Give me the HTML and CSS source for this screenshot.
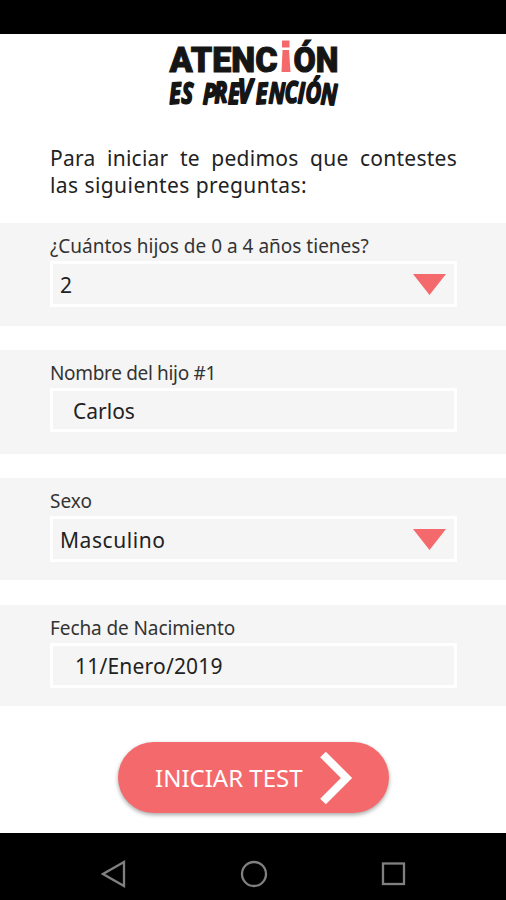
FILE: index.html
```html
<!DOCTYPE html>
<html lang="es">
<head>
<meta charset="utf-8">
<meta name="viewport" content="width=device-width, initial-scale=1">
<title>Atención es prevención</title>
<link rel="stylesheet" href="styles.css">
</head>
<body>
<div class="status-bar"></div>
<main>
  <header class="brand">
    <svg class="logo" width="174" height="74" viewBox="166 34 174 74" aria-label="Atención es prevención">
      <g class="logo-main">
        <text x="169.500" y="71.500" textLength="108" lengthAdjust="spacingAndGlyphs">ATENC</text>
        <text x="293.500" y="71.500" textLength="45" lengthAdjust="spacingAndGlyphs">ÓN</text>
      </g>
      <path class="logo-mark" d="M282 40.500h7.500v7h-7.500zM282.500 50h6.500l1.500 22h-9z"/>
      <g class="logo-brush" transform="translate(0 103) scale(.74 1)">
        <text x="229 245" y="1 0" rotate="-3 3">ES</text>
        <text x="274 290 308" y="1 0 1" rotate="2 -3 0">PRE</text>
        <text class="tall" x="321" y="0">V</text>
        <text x="346 363 385 402 413 433" y="1 0 0 0 0 1" rotate="-2 2 -3 3 0 3">ENCIÓN</text>
      </g>
    </svg>
  </header>
  <p class="intro"><span class="spread">Para iniciar te pedimos que contestes</span><span class="intro-end">las siguientes preguntas:</span></p>
  <form class="questions">
    <section class="band band-count">
      <div class="label label-count">¿Cuántos hijos de 0 a 4 años tienes?</div>
      <div class="field"><span>2</span><svg class="arrow" width="33" height="21" viewBox="0 0 33 21"><path d="M0 0H33L16.500 21z"/></svg></div>
    </section>
    <section class="band band-name">
      <div class="label label-name">Nombre del hijo #1</div>
      <div class="field field-name"><span class="name">Carlos</span></div>
    </section>
    <section class="band band-sex">
      <div class="label label-sex">Sexo</div>
      <div class="field"><span class="sex">Masculino</span><svg class="arrow" width="33" height="21" viewBox="0 0 33 21"><path d="M0 0H33L16.500 21z"/></svg></div>
    </section>
    <section class="band band-date">
      <div class="label label-date">Fecha de Nacimiento</div>
      <div class="field field-date"><span class="date">11/Enero/2019</span></div>
    </section>
    <button class="start" type="button"><span>INICIAR TEST</span><svg width="34" height="54" viewBox="0 0 34 54"><path d="M4 3.500L27.500 27L4 50.500"/></svg></button>
  </form>
</main>
<nav class="nav-bar">
  <svg width="26" height="28" viewBox="0 0 26 28"><path d="M23 2V26L2 14z"/></svg>
  <svg width="28" height="28" viewBox="0 0 28 28"><circle cx="14" cy="14" r="12"/></svg>
  <svg width="26" height="28" viewBox="0 0 26 28"><rect x="3" y="3.500" width="21" height="20.500"/></svg>
</nav>
</body>
</html>
```
FILE: styles.css
```css
* { box-sizing: border-box; }
body {
  margin: 0;
  width: 506px;
  height: 900px;
  display: flex;
  flex-direction: column;
  overflow: hidden;
  background: #fff;
  color: #222;
  font-family: "Noto Sans", sans-serif;
}
.status-bar { height: 34px; background: #000; flex: none; }
main { height: 799px; flex: none; }
.brand { height: 74px; padding-left: 166px; }
.logo { display: block; overflow: visible; }
.logo-main { font: 900 35px Roboto, sans-serif; fill: #151515; stroke: #151515; stroke-width: 1; }
.logo-mark { fill: #f46a6c; }
.logo-brush {
  font: italic 700 29px "Open Sans", sans-serif;
  fill: #151515;
  stroke: #151515;
  stroke-width: 2;
  stroke-linejoin: round;
}
.logo-brush .tall { font-size: 34px; }
.intro {
  margin: 0;
  padding: 37px 49px 0 50px;
  height: 115px;
  font-size: 21px;
  line-height: 27px;
}
.intro span { display: block; white-space: nowrap; }
.spread { text-align-last: justify; letter-spacing: .25px; }
.intro-end { letter-spacing: .43px; }
.band { padding: 11px 49px 0 50px; margin-bottom: 24px; background: #f5f5f5; }
.band-count { height: 103px; }
.band-name { height: 104px; }
.band-sex { height: 102px; margin-bottom: 25px; }
.band-date { height: 101px; margin-bottom: 36px; }
.label { height: 27px; line-height: 24px; font-size: 19px; white-space: nowrap; color: #333; }
.label-name { letter-spacing: -.33px; }
.label-date { letter-spacing: -.1px; }
.field {
  display: flex;
  align-items: center;
  justify-content: space-between;
  height: 46px;
  padding: 2px 8px 0 7px;
  border: 3px solid #fff;
  font-size: 21px;
  line-height: 28px;
}
.field-name { height: 44px; padding-left: 20px; }
.field-date { height: 45px; padding: 0 8px 0 22px; }
.sex { letter-spacing: .55px; }
.date { letter-spacing: .2px; }
.arrow { margin-bottom: 2px; fill: #f46a6c; }
.start {
  display: flex;
  align-items: center;
  justify-content: space-between;
  width: 271px;
  height: 71px;
  margin-left: 118px;
  padding: 0 36px 0 37px;
  border: 0;
  border-radius: 36px;
  background: #f46a6c;
  box-shadow: 0 2px 4px rgb(0 0 0 / .35);
  color: #fff;
  font: 24px "Noto Sans", sans-serif;
  white-space: nowrap;
}
.start svg { fill: none; stroke: #fff; stroke-width: 8; }
.nav-bar {
  display: flex;
  align-items: center;
  justify-content: space-between;
  height: 67px;
  padding: 14px 100px 0 101px;
  background: #000;
}
.nav-bar svg { fill: none; stroke: #808080; stroke-width: 2.300; }
```
